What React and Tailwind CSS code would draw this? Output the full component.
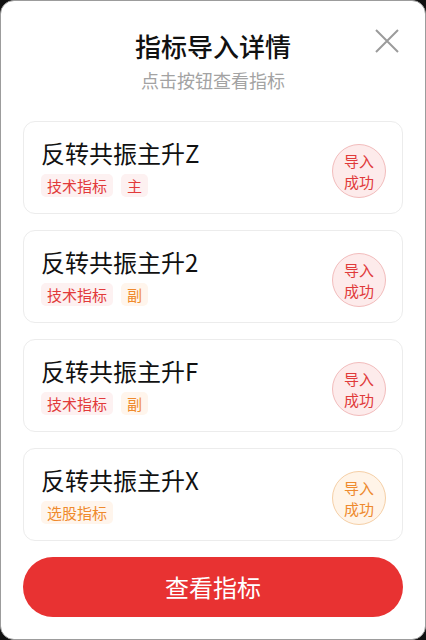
const items = [
    { name: '反转共振主升Z', type: '技术指标', role: '主', tone: 'red' },
    { name: '反转共振主升2', type: '技术指标', role: '副', tone: 'red' },
    { name: '反转共振主升F', type: '技术指标', role: '副', tone: 'red' },
    { name: '反转共振主升X', type: '选股指标', role: null, tone: 'orange' },
];

function Tag({ children, color }) {
    return (
        <span
            className={`h-[23px] px-[6px] rounded-[5px] text-[15px] leading-[23px] ${color === 'orange' ? 'bg-[#fff5ec] text-[#ef8a2c]' : 'bg-[#fdf1f1] text-[#e23a3a]'
                }`}
        >
            {children}
        </span>
    );
}

function ItemCard({ item }) {
    const orange = item.tone === 'orange';
    return (
        <div className="h-[93px] rounded-[12px] border border-[#ececec] bg-white pl-[17px] pr-[16px] flex items-center">
            <div className="flex-1 min-w-0 flex flex-col self-stretch pt-[16px]">
                <p className="text-[24px] leading-[30px] text-[#111]">{item.name}</p>
                <div className="flex gap-[8px] mt-[6px]">
                    <Tag color={orange ? 'orange' : 'red'}>{item.type}</Tag>
                    {item.role && <Tag color={item.role === '副' ? 'orange' : 'red'}>{item.role}</Tag>}
                </div>
            </div>
            <div
                className={`mt-[7px] w-[54px] h-[54px] rounded-full border flex flex-col items-center justify-center text-[15px] leading-[21px] ${orange ? 'bg-[#fff4e8] border-[#f5cfa6] text-[#ee8a2e]' : 'bg-[#fdebeb] border-[#f2bcbc] text-[#e03a3a]'
                    }`}
            >
                <span>导入</span>
                <span>成功</span>
            </div>
        </div>
    );
}

export default function App() {
    return (
        <div className="w-[426px] h-[640px] bg-[#111] font-['Noto_Sans_CJK_SC','Noto_Sans',sans-serif]">
            <div className="relative h-full rounded-[14px] border border-[#9c9c9c] bg-white px-[22px] flex flex-col">
                {/* Close */}
                <button className="absolute right-[26px] top-[28px] w-[24px] h-[24px]" aria-label="关闭">
                    <svg viewBox="0 0 24 24" className="w-[24px] h-[24px]" fill="none" stroke="#9b9b9b" strokeWidth="2">
                        <path d="M1 1 L23 23 M23 1 L1 23" />
                    </svg>
                </button>

                {/* Header */}
                <h2 className="mt-[29px] text-center text-[26px] leading-[32px] font-medium text-[#111]">指标导入详情</h2>
                <p className="mt-[6px] text-center text-[18px] leading-[24px] text-[#a3a3a3]">点击按钮查看指标</p>

                {/* List */}
                <div className="mt-[29px] flex flex-col gap-[16px]">
                    {items.map((item) => (
                        <ItemCard key={item.name} item={item} />
                    ))}
                </div>

                {/* Action */}
                <button className="mt-[16px] h-[60px] w-full rounded-full bg-[#e83232] text-white text-[24px] leading-[60px]">
                    查看指标
                </button>
            </div>
        </div>
    );
}
